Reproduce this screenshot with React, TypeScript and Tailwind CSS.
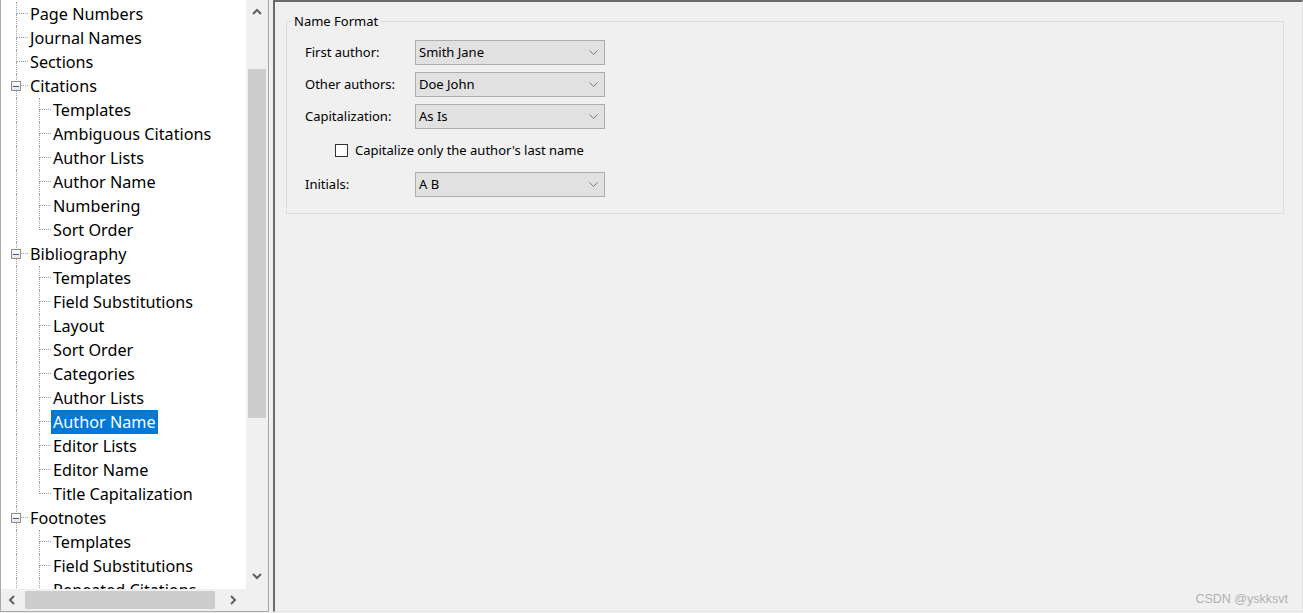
import React from "react";

/* ─────────────────────────────── data ─── */

type TreeRow = {
  label: string;
  level: 1 | 2;
  expander?: boolean;
  last?: boolean;
  selected?: boolean;
};

const TREE: TreeRow[] = [
  { label: "Page Numbers", level: 1 },
  { label: "Journal Names", level: 1 },
  { label: "Sections", level: 1 },
  { label: "Citations", level: 1, expander: true },
  { label: "Templates", level: 2 },
  { label: "Ambiguous Citations", level: 2 },
  { label: "Author Lists", level: 2 },
  { label: "Author Name", level: 2 },
  { label: "Numbering", level: 2 },
  { label: "Sort Order", level: 2, last: true },
  { label: "Bibliography", level: 1, expander: true },
  { label: "Templates", level: 2 },
  { label: "Field Substitutions", level: 2 },
  { label: "Layout", level: 2 },
  { label: "Sort Order", level: 2 },
  { label: "Categories", level: 2 },
  { label: "Author Lists", level: 2 },
  { label: "Author Name", level: 2, selected: true },
  { label: "Editor Lists", level: 2 },
  { label: "Editor Name", level: 2 },
  { label: "Title Capitalization", level: 2, last: true },
  { label: "Footnotes", level: 1, expander: true },
  { label: "Templates", level: 2 },
  { label: "Field Substitutions", level: 2 },
  { label: "Repeated Citations", level: 2 },
];

const uiFont = { fontFamily: '"Noto Sans", "Open Sans", sans-serif' };

/* ─────────────────────────────── page ─── */

export default function App() {
  return (
    <div className="flex h-[613px] w-[1303px] bg-[#f0f0f0] overflow-hidden" style={uiFont}>
      <TreePanel />
      <div className="ml-[4px] flex-1 flex flex-col border-l-2 border-t-2 border-[#6a6a6a] border-r border-r-[#e3e3e3] border-b border-b-[#e3e3e3] h-[612px]">
        <NameFormat />
        <div className="flex-1" />
        <div className="flex justify-end pr-[14px] pb-[2px]">
          <span className="text-[12.5px] text-[#b0b0b0]" style={{ fontFamily: '"Liberation Sans", Arial, sans-serif' }}>
            CSDN @yskksvt
          </span>
        </div>
      </div>
    </div>
  );
}

/* ─────────────────────────────── tree ─── */

const TreePanel = () => (
  <div className="w-[269px] h-[612px] flex flex-col border-l border-r border-b border-[#a9a9a9] shrink-0">
    <div className="flex flex-1 min-h-0">
      <div className="flex-1 bg-white overflow-hidden pt-[2px]">
        {TREE.map((row, i) => (
          <TreeItem key={i} row={row} />
        ))}
      </div>
      <VScroll />
    </div>
    <div className="flex h-[22px] shrink-0">
      <HScroll />
      <div className="w-[22px] bg-[#f0f0f0]" />
    </div>
  </div>
);

// elbow: vertical guide with a branch to the right at mid-height
const Connector = ({ half = false }: { half?: boolean }) => (
  <div className="w-[23px] h-[24px] flex shrink-0">
    <div className="w-[11px]" />
    <div className="flex-1 flex flex-col">
      <div className="h-[12px] border-l border-b border-dotted border-[#a0a0a0]" />
      <div className={`h-[12px] ${half ? "" : "border-l border-dotted border-[#a0a0a0]"}`} />
    </div>
  </div>
);

const Guide = () => (
  <div className="w-[23px] h-[24px] flex shrink-0">
    <div className="w-[11px]" />
    <div className="flex-1 border-l border-dotted border-[#a0a0a0]" />
  </div>
);

const TreeItem = ({ row }: { row: TreeRow }) => (
  <div className="flex h-[24px] items-center pl-[4px]">
    {row.level === 1 ? (
      <div className="relative">
        <Connector />
        {row.expander && (
          <div className="absolute left-[6px] top-[7px] w-[10px] h-[10px] border border-[#919191] bg-gradient-to-b from-white to-[#e6e6e6] flex items-center justify-center">
            <div className="w-[6px] h-px bg-[#3a5aa0]" />
          </div>
        )}
      </div>
    ) : (
      <>
        <Guide />
        <Connector half={row.last} />
      </>
    )}
    <span
      className={`px-[2px] h-[24px] leading-[24px] text-[16.2px] whitespace-nowrap ${
        row.selected ? "bg-[#0078d7] text-white" : "text-black"
      }`}
    >
      {row.label}
    </span>
  </div>
);

const Chevron = ({ dir }: { dir: "up" | "down" | "left" | "right" }) => {
  const pts = {
    up: "1,6 5,2 9,6",
    down: "1,2 5,6 9,2",
    left: "6,1 2,5 6,9",
    right: "2,1 6,5 2,9",
  }[dir];
  const w = dir === "up" || dir === "down" ? 10 : 8;
  const h = dir === "up" || dir === "down" ? 8 : 10;
  return (
    <svg width={w} height={h} viewBox={`0 0 ${w} ${h}`}>
      <polyline points={pts} fill="none" stroke="#606060" strokeWidth="2" />
    </svg>
  );
};

const VScroll = () => (
  <div className="w-[22px] bg-[#f0f0f0] flex flex-col">
    <div className="h-[22px] flex items-center justify-center pt-[2px]">
      <Chevron dir="up" />
    </div>
    <div className="flex-1 px-[2px] pt-[47px]">
      <div className="h-[349px] bg-[#cdcdcd]" />
    </div>
    <div className="h-[22px] flex items-center justify-center pb-[4px]">
      <Chevron dir="down" />
    </div>
  </div>
);

const HScroll = () => (
  <div className="flex-1 bg-[#f0f0f0] flex">
    <div className="w-[22px] flex items-center justify-center">
      <Chevron dir="left" />
    </div>
    <div className="flex-1 py-[2px] pl-[2px]">
      <div className="w-[190px] h-full bg-[#cdcdcd]" />
    </div>
    <div className="w-[22px] flex items-center justify-center pr-[4px]">
      <Chevron dir="right" />
    </div>
  </div>
);

/* ─────────────────────────────── form ─── */

const Combo = ({ value }: { value: string }) => (
  <div className="w-[190px] h-[25px] bg-[#e1e1e1] border border-[#adadad] flex items-center pl-[3px] pr-[6px]">
    <span className="flex-1 text-[13px] text-black pt-[1px]">{value}</span>
    <svg width="9" height="5" viewBox="0 0 9 5">
      <polyline points="0.5,0.5 4.5,4.5 8.5,0.5" fill="none" stroke="#7a7a7a" strokeWidth="1" />
    </svg>
  </div>
);

const FieldRow = ({ label, value }: { label: string; value: string }) => (
  <div className="flex items-center">
    <span className="w-[110px] text-[13px] text-black pt-[1px]">{label}</span>
    <Combo value={value} />
  </div>
);

const NameFormat = () => (
  <fieldset className="ml-[11px] mr-[18px] mt-[11px] h-[201px] border border-[#dcdcdc] pl-[18px]">
    <legend className="ml-[-13px] px-[2px] text-[13px] text-black leading-[16px]">Name Format</legend>
    <div className="flex flex-col gap-[7px] pt-[11px]">
      <FieldRow label="First author:" value="Smith Jane" />
      <FieldRow label="Other authors:" value="Doe John" />
      <FieldRow label="Capitalization:" value="As Is" />
    </div>
    <div className="flex items-center h-[43px] pl-[30px]">
      <div className="w-[13px] h-[13px] border border-[#333] bg-white" />
      <span className="ml-[7px] text-[13px] text-black">Capitalize only the author's last name</span>
    </div>
    <FieldRow label="Initials:" value="A B" />
  </fieldset>
);
